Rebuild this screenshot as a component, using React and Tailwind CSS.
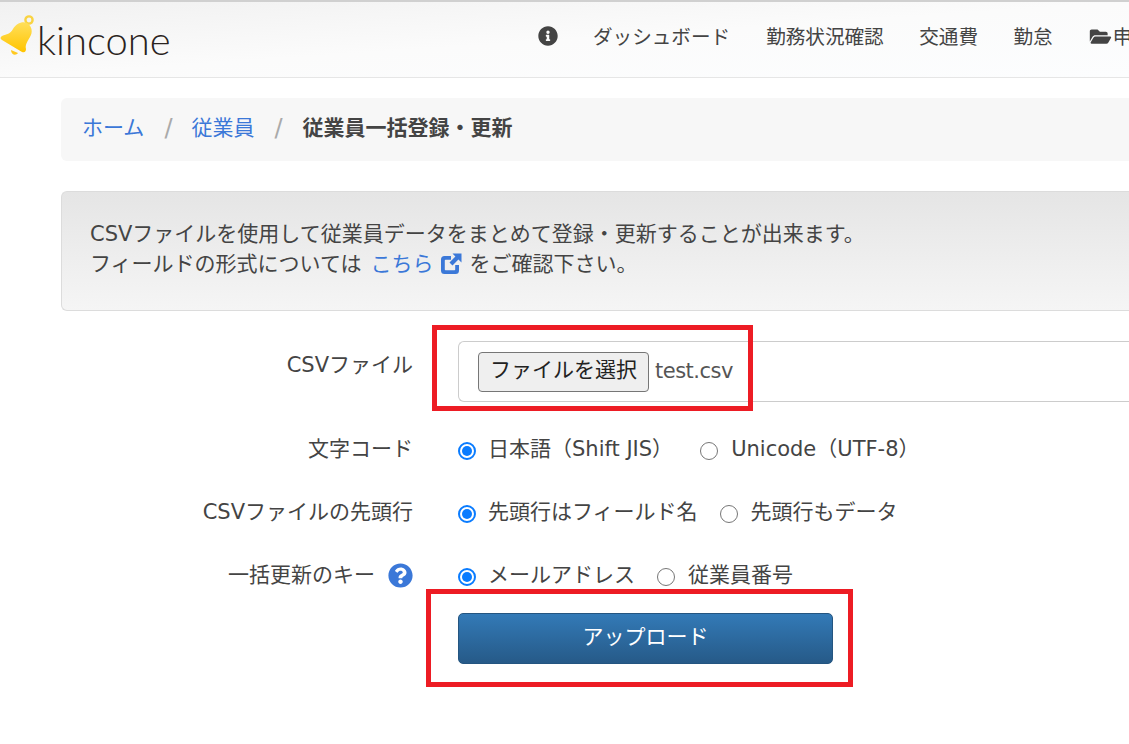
import React from "react";
import { FaInfoCircle, FaFolderOpen, FaQuestionCircle } from "react-icons/fa";

const font = { fontFamily: '"DejaVu Sans", "Noto Sans CJK JP", sans-serif' };

function Radio({ checked, label, gap = "" }) {
  return (
    <label className={`flex items-center ${gap}`}>
      {checked ? (
        <span className="flex h-[18px] w-[18px] items-center justify-center rounded-full border-2 border-[#0a7cff] bg-white">
          <span className="h-[10px] w-[10px] rounded-full bg-[#0a7cff]" />
        </span>
      ) : (
        <span className="h-[18px] w-[18px] rounded-full border border-[#767676] bg-white" />
      )}
      <span className={`${checked ? "ml-[12px]" : "ml-[13px]"} whitespace-nowrap pb-[3px]`}>{label}</span>
    </label>
  );
}

function Row({ label, children, className = "" }) {
  return (
    <div className={`flex items-center ${className}`}>
      <div className="flex w-[352px] items-center justify-end whitespace-nowrap">{label}</div>
      <div className="ml-[45px] flex flex-1 items-center">{children}</div>
    </div>
  );
}

function Bell() {
  return (
    <svg width="34" height="41" viewBox="0 0 34 41" className="mb-[4px] shrink-0">
      <defs>
        <linearGradient id="bell" x1="0" y1="0" x2="0" y2="1">
          <stop offset="0" stopColor="#ffdf5a" />
          <stop offset="1" stopColor="#ffc400" />
        </linearGradient>
      </defs>
      <circle cx="29" cy="5" r="3.6" fill="none" stroke="#f9d342" strokeWidth="2.4" />
      <path d="M27 8 C22 6 16 9 13 14 C10 19 7 19 2 21 C0 22 0 24 2 25 L22 37 C25 38 26 36 26 34 C25 30 27 27 30 22 C33 17 32 11 27 8 Z" fill="url(#bell)" />
      <path d="M11 35 C11 40 16 41 18 38 Z" fill="#ffc91f" />
    </svg>
  );
}

function ExternalIcon() {
  return (
    <svg width="22" height="22" viewBox="0 0 22 22" className="ml-[6px] mr-[8px] shrink-0" fill="#3b78d8">
      <path d="M4.5 3 H11 V6.8 H5.5 Q4.8 6.8 4.8 7.5 V16.5 Q4.8 17.2 5.5 17.2 H14.5 Q15.2 17.2 15.2 16.5 V12 H19 V17.5 Q19 21 15.5 21 H4.5 Q1 21 1 17.5 V6.5 Q1 3 4.5 3 Z" />
      <path d="M12.5 0.5 H21.5 V9.5 L18.4 6.6 L12.5 12.5 L9.5 9.5 L15.4 3.6 Z" />
    </svg>
  );
}

export default function App() {
  return (
    <div style={font} className="relative h-[744px] w-[1129px] overflow-hidden bg-white text-[21px] leading-[30px] text-[#444]">
      <header className="flex h-[78px] w-[1129px] items-center border-t-2 border-b border-t-[#d0d0d0] border-b-[#e6e6e6] bg-gradient-to-br from-[#f1f1f1] via-[#fbfbfb] to-[#fcfdfe]">
        <div className="flex w-[538px] shrink-0 items-center pb-[4px]">
          <Bell />
          <span style={{ fontFamily: "Lato, sans-serif" }} className="ml-[3px] mt-[4px] text-[40px] font-light leading-none text-[#2a2320]">kincone</span>
        </div>
        <nav className="flex shrink-0 items-center whitespace-nowrap pb-[3px] text-[19.6px] text-[#444]">
          <FaInfoCircle className="mb-[4px] mr-[35px] h-[20px] w-[20px] text-[#444]" />
          <span className="mr-[36px]">ダッシュボード</span>
          <span className="mr-[35.5px]">勤務状況確認</span>
          <span className="mr-[35.5px]">交通費</span>
          <span className="mr-[35px]">勤怠</span>
          <FaFolderOpen className="mb-[3px] h-[19px] w-[25px] text-[#444]" />
          <span>申請</span>
        </nav>
      </header>

      <main className="w-[1200px] pl-[61px] pt-[20px]">
        <div className="flex h-[63px] items-center rounded-l-md bg-[#f7f7f7] pb-[4px] pl-[21px]">
          <a className="text-[#3b78d8]">ホーム</a>
          <span className="ml-[20px] mr-[19px] text-[24px] text-[#aaa]">/</span>
          <a className="text-[#3b78d8]">従業員</a>
          <span className="ml-[20px] mr-[20px] text-[24px] text-[#aaa]">/</span>
          <span className="font-bold text-[#444]">従業員一括登録・更新</span>
        </div>

        <div className="mt-[30px] h-[120px] rounded-l-md border border-r-0 border-[#dcdcdc] bg-gradient-to-b from-[#e5e5e5] to-[#f5f5f5] pl-[28px] pt-[27px]">
          <p>CSVファイルを使用して従業員データをまとめて登録・更新することが出来ます。</p>
          <p className="flex items-center">
            フィールドの形式については
            <a className="ml-[9px] flex items-center text-[#3b78d8]">
              こちら
              <ExternalIcon />
            </a>
            をご確認下さい。
          </p>
        </div>

        <Row className="mt-[30px] items-start" label={<span className="pt-[9px]">CSVファイル</span>}>
          <div className="flex h-[61px] flex-1 items-center rounded-l-md border border-r-0 border-[#ccc] pl-[19px]">
            <button className="h-[40px] w-[171px] rounded-[4px] border border-[#767676] bg-[#efefef] pb-[2px] text-center text-[21px] leading-none text-[#222]">ファイルを選択</button>
            <span className="ml-[6px] pb-[1px] tracking-[-0.5px] text-[#555]">test.csv</span>
          </div>
        </Row>

        <Row className="mt-[32px]" label={<span className="pb-[3px]">文字コード</span>}>
          <Radio checked gap="mr-[27px]" label="日本語（Shift JIS）" />
          <Radio label="Unicode（UTF-8）" />
        </Row>

        <Row className="mt-[30px]" label={<span className="pb-[3px]">CSVファイルの先頭行</span>}>
          <Radio checked gap="mr-[22px]" label="先頭行はフィールド名" />
          <Radio label="先頭行もデータ" />
        </Row>

        <Row
          className="mt-[30px]"
          label={
            <>
              <span className="pb-[3px]">一括更新のキー</span>
              <FaQuestionCircle className="mb-[3px] ml-[13px] h-[25px] w-[25px] text-[#3b78d8]" />
            </>
          }
        >
          <Radio checked gap="mr-[22px]" label="メールアドレス" />
          <Radio label="従業員番号" />
        </Row>

        <div className="ml-[397px] mt-[20px]">
          <button className="h-[51px] w-[375px] rounded-[5px] border border-[#245580] bg-gradient-to-b from-[#337ab7] to-[#265a88] pb-[4px] text-[21px] text-white">アップロード</button>
        </div>
      </main>

      <div className="absolute left-[432px] top-[325px] h-[86px] w-[321px] border-[5px] border-[#ed1c24]" />
      <div className="absolute left-[426px] top-[589px] h-[98px] w-[427px] border-[5px] border-[#ed1c24]" />
    </div>
  );
}
